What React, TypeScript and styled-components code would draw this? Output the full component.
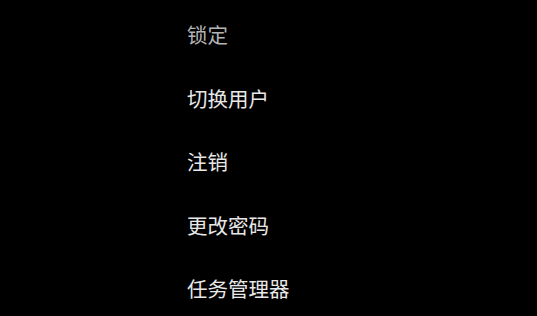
import styled, { createGlobalStyle } from 'styled-components';

const GlobalStyle = createGlobalStyle`
  html, body {
    margin: 0;
    padding: 0;
    background: #000;
  }
  body {
    font-family: "Noto Sans CJK SC", "Noto Sans", sans-serif;
  }
`;

const Screen = styled.div`
  width: 537px;
  height: 316px;
  background: #000;
  overflow: hidden;
`;

const Menu = styled.ul`
  list-style: none;
  margin: 0;
  padding: 3px 0 0 187px;
  display: flex;
  flex-direction: column;
`;

const Option = styled.li<{ $dim?: boolean }>`
  height: 63.6px;
  line-height: 63.6px;
  font-size: 20.5px;
  color: ${(p) => (p.$dim ? '#b4b4b4' : '#e8e8e8')};
  white-space: nowrap;
  cursor: pointer;
`;

const items = ['锁定', '切换用户', '注销', '更改密码', '任务管理器'];

export default function App() {
  return (
    <Screen>
      <GlobalStyle />
      <Menu>
        {items.map((label, i) => (
          <Option key={label} $dim={i === 0}>
            {label}
          </Option>
        ))}
      </Menu>
    </Screen>
  );
}
